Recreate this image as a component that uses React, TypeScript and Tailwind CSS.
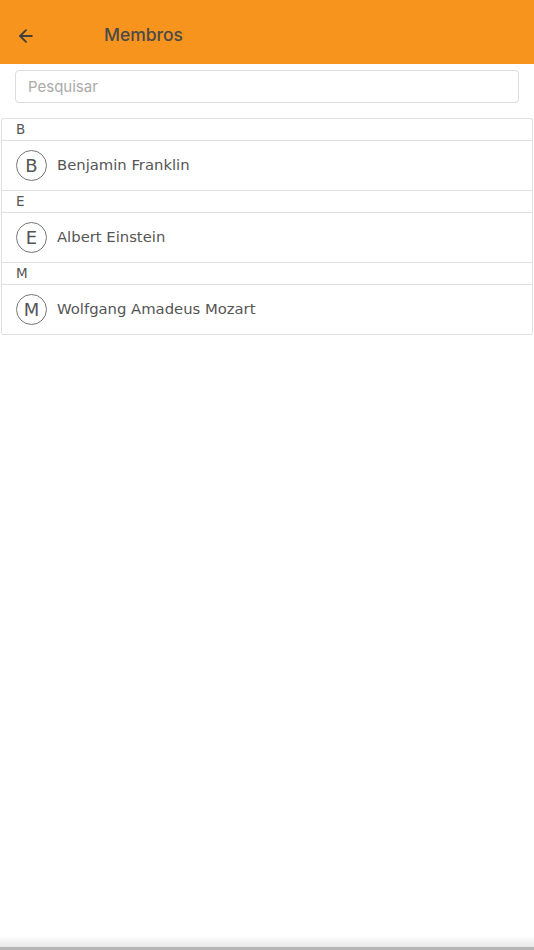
import React from 'react';
import { ArrowLeft } from 'lucide-react';

const groups = [
    { letter: 'B', members: ['Benjamin Franklin'] },
    { letter: 'E', members: ['Albert Einstein'] },
    { letter: 'M', members: ['Wolfgang Amadeus Mozart'] },
];

const App: React.FC = () => {
    return (
        <div className="h-[950px] flex flex-col bg-white">
            {/* Header */}
            <header className="h-16 bg-[#f7941d] flex items-center pt-[7px] shrink-0">
                <button className="w-[52px] h-10 flex items-center justify-center text-[#3f3f3f]">
                    <ArrowLeft className="h-5 w-5" strokeWidth={2.2} />
                </button>
                <h1 className="ml-[52px] text-[17.5px] font-medium text-[#4a4a4a] font-['Inter',sans-serif]">
                    Membros
                </h1>
            </header>

            <main className="flex-1 pt-[6px]">
                {/* Search */}
                <div className="px-[15px]">
                    <input
                        type="text"
                        placeholder="Pesquisar"
                        className="w-full h-[33px] rounded border border-[#dcdcdc] px-3 text-[15px] text-[#555] placeholder:text-[#aaa] outline-none font-['Inter',sans-serif]"
                    />
                </div>

                {/* Member list */}
                <div className="mx-px mt-[15px] border-x border-t border-[#e0e0e0] rounded-[3px] font-['Verdana','DejaVu_Sans',sans-serif]">
                    {groups.map((g) => (
                        <div key={g.letter}>
                            <div className="h-[22px] flex items-center pl-[14px] text-[13.5px] text-[#555] border-b border-[#e0e0e0]">
                                {g.letter}
                            </div>
                            {g.members.map((m) => (
                                <div key={m} className="h-[50px] flex items-center pl-[14px] border-b border-[#e0e0e0]">
                                    <div className="w-[31px] h-[31px] rounded-full border border-[#777] flex items-center justify-center text-[18px] text-[#555] leading-none">
                                        {g.letter}
                                    </div>
                                    <span className="ml-[10px] text-[14.8px] text-[#555]">{m}</span>
                                </div>
                            ))}
                        </div>
                    ))}
                </div>
            </main>

            {/* Bottom edge */}
            <div className="h-[14px] shrink-0 bg-gradient-to-b from-white to-[#e8e8e8] border-b-[3px] border-[#b5b5b5]" />
        </div>
    );
};

export default App;
